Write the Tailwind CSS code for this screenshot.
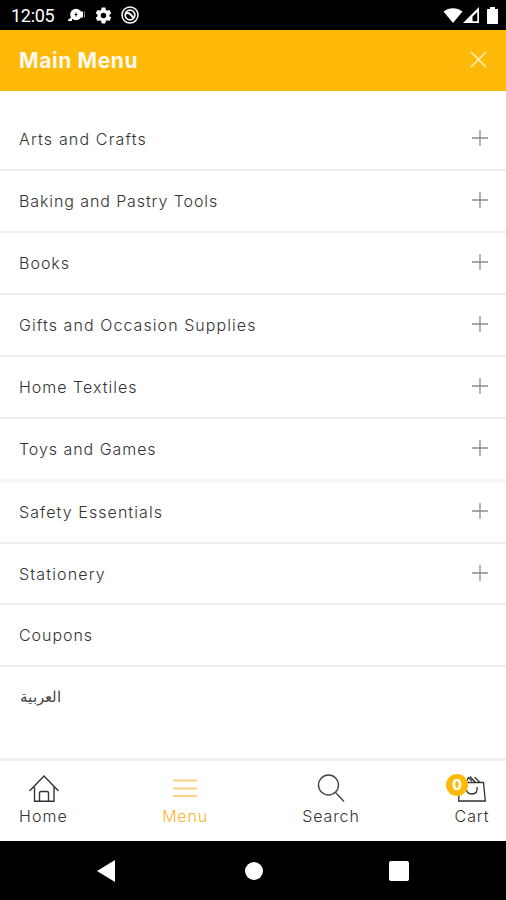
<!DOCTYPE html>
<html lang="en">
<head>
  <meta charset="UTF-8">
  <meta name="viewport" content="width=device-width, initial-scale=1.0">
  <title>Main Menu</title>
  <script src="https://cdn.jsdelivr.net/npm/@tailwindcss/browser@4"></script>
</head>
<body class="bg-white font-['Inter','Noto_Sans',sans-serif] text-[#333]">
  <div class="flex flex-col w-[506px] h-[900px] overflow-hidden">

    <!-- Status bar -->
    <div class="flex items-center h-[30px] shrink-0 bg-black text-white pl-[11px] pr-[8px]">
      <span class="font-['Roboto',sans-serif] text-[18px] leading-none tracking-[-0.3px] w-[57px] pt-[2px]">12:05</span>
      <svg class="w-[18px] h-[18px]" viewBox="0 0 18 18" fill="currentColor">
        <circle cx="8" cy="8.500" r="5.800"/><path d="M4 10v5H0z"/><circle cx="1.500" cy="14" r="1.300"/>
        <rect x="12" y="5.500" width="3" height="6"/><rect x="16" y="5.500" width="1" height="6" opacity=".5"/>
        <path d="M8 6.500v4M6.500 8.500h3" stroke="#000" stroke-width=".9"/>
      </svg>
      <svg class="w-[19px] h-[19px] ml-[8px]" viewBox="0 0 24 24" fill="currentColor">
        <path fill-rule="evenodd" d="M19.43 12.98c.04-.32.07-.64.07-.98s-.03-.66-.07-.98l2.11-1.65c.19-.15.24-.42.12-.64l-2-3.46c-.12-.22-.39-.3-.61-.22l-2.49 1c-.52-.4-1.08-.73-1.69-.98l-.38-2.65A.49.49 0 0 0 14 2h-4c-.25 0-.46.18-.49.42l-.38 2.65c-.61.25-1.17.59-1.69.98l-2.49-1c-.23-.09-.49 0-.61.22l-2 3.46c-.13.22-.07.49.12.64l2.11 1.65c-.04.32-.07.65-.07.98s.03.66.07.98l-2.11 1.65c-.19.15-.24.42-.12.64l2 3.46c.12.22.39.3.61.22l2.49-1c.52.4 1.08.73 1.69.98l.38 2.65c.03.24.24.42.49.42h4c.25 0 .46-.18.49-.42l.38-2.65c.61-.25 1.17-.59 1.69-.98l2.49 1c.23.09.49 0 .61-.22l2-3.46c.12-.22.07-.49-.12-.64zM12 15.500a3.500 3.500 0 1 1 0-7 3.500 3.500 0 0 1 0 7z"/>
      </svg>
      <svg class="w-[18px] h-[18px] ml-[8px]" viewBox="0 0 18 18" fill="none" stroke="currentColor">
        <circle cx="9" cy="9" r="8" stroke-width="1.500"/>
        <circle cx="9" cy="9" r="4.800" stroke-width="1.800"/>
        <path d="M5 7.500C8 6 9.500 8 12.500 12" stroke-width="2"/>
      </svg>
      <svg class="w-[20px] h-[17px] ml-auto" viewBox="0 0 20 17" fill="currentColor">
        <path d="M0.500 4.500C6 0 14 0 19.500 4.500L10 16z"/>
      </svg>
      <svg class="w-[16px] h-[16px]" viewBox="0 0 16 16" fill="currentColor">
        <path fill-rule="evenodd" d="M16 0v16H0zM14.300 5v9.300H9.500V9.500z"/>
      </svg>
      <svg class="w-[11px] h-[17px] ml-[8px]" viewBox="0 0 11 17" fill="currentColor">
        <path d="M3 0h5v2h2.300q.7 0 .7.7v13.600q0 .7-.7.7H.7q-.7 0-.7-.7V2.700Q0 2 .7 2H3z"/>
      </svg>
    </div>

    <!-- Header -->
    <header class="flex items-center justify-between h-[61px] shrink-0 bg-[#ffb908] text-[#fffaf0] pl-[19px] pr-[19px]">
      <h1 class="text-[21px] font-bold leading-none tracking-[0.6px]">Main Menu</h1>
      <svg class="w-[17px] h-[17px] mb-[2px]" viewBox="0 0 17 17" fill="none" stroke="#fff0c8" stroke-width="1.500"><path d="M1 1l15 15M16 1L1 16"/></svg>
    </header>

    <!-- Categories -->
    <ul class="flex flex-col pt-[18px] text-[16px] font-light">
      <li class="flex items-center justify-between h-[62px] pl-[19px] pr-[17px] border-b-2 border-[#eeeeee]">
        <span class="tracking-[1.15px]">Arts and Crafts</span>
        <svg class="w-[18px] h-[18px] mb-[2px]" viewBox="0 0 18 18" fill="none" stroke="#8c8c8c" stroke-width="1.300"><path d="M9 1v16M1 9h16"/></svg>
      </li>
      <li class="flex items-center justify-between h-[62px] pl-[19px] pr-[17px] border-b-2 border-[#eeeeee]">
        <span class="tracking-[0.9px]">Baking and Pastry Tools</span>
        <svg class="w-[18px] h-[18px] mb-[2px]" viewBox="0 0 18 18" fill="none" stroke="#8c8c8c" stroke-width="1.300"><path d="M9 1v16M1 9h16"/></svg>
      </li>
      <li class="flex items-center justify-between h-[62px] pl-[19px] pr-[17px] border-b-2 border-[#eeeeee]">
        <span class="tracking-[1px]">Books</span>
        <svg class="w-[18px] h-[18px] mb-[2px]" viewBox="0 0 18 18" fill="none" stroke="#8c8c8c" stroke-width="1.300"><path d="M9 1v16M1 9h16"/></svg>
      </li>
      <li class="flex items-center justify-between h-[62px] pl-[19px] pr-[17px] border-b-2 border-[#eeeeee]">
        <span class="tracking-[1.07px]">Gifts and Occasion Supplies</span>
        <svg class="w-[18px] h-[18px] mb-[2px]" viewBox="0 0 18 18" fill="none" stroke="#8c8c8c" stroke-width="1.300"><path d="M9 1v16M1 9h16"/></svg>
      </li>
      <li class="flex items-center justify-between h-[62px] pl-[19px] pr-[17px] border-b-2 border-[#eeeeee]">
        <span class="tracking-[1px]">Home Textiles</span>
        <svg class="w-[18px] h-[18px] mb-[2px]" viewBox="0 0 18 18" fill="none" stroke="#8c8c8c" stroke-width="1.300"><path d="M9 1v16M1 9h16"/></svg>
      </li>
      <li class="flex items-center justify-between h-[64px] pl-[19px] pr-[17px] border-b-4 border-[#f7f7f7]">
        <span class="tracking-[0.95px]">Toys and Games</span>
        <svg class="w-[18px] h-[18px] mb-[2px]" viewBox="0 0 18 18" fill="none" stroke="#8c8c8c" stroke-width="1.300"><path d="M9 1v16M1 9h16"/></svg>
      </li>
      <li class="flex items-center justify-between h-[61px] pl-[19px] pr-[17px] pb-[2px] border-b-2 border-[#eeeeee]">
        <span class="tracking-[1.07px]">Safety Essentials</span>
        <svg class="w-[18px] h-[18px] mb-[2px]" viewBox="0 0 18 18" fill="none" stroke="#8c8c8c" stroke-width="1.300"><path d="M9 1v16M1 9h16"/></svg>
      </li>
      <li class="flex items-center justify-between h-[61px] pl-[19px] pr-[17px] border-b-2 border-[#eeeeee]">
        <span class="tracking-[1.15px]">Stationery</span>
        <svg class="w-[18px] h-[18px] mb-[2px]" viewBox="0 0 18 18" fill="none" stroke="#8c8c8c" stroke-width="1.300"><path d="M9 1v16M1 9h16"/></svg>
      </li>
      <li class="flex items-center h-[62px] pl-[19px] border-b-2 border-[#eeeeee]">
        <span class="tracking-[0.95px]">Coupons</span>
      </li>
      <li class="flex items-center h-[62px] pl-[20px]">
        <span lang="ar" class="font-['DejaVu_Sans',sans-serif] text-[14.500px] text-[#444]">العربية</span>
      </li>
    </ul>

    <!-- Tab bar -->
    <nav class="flex justify-between h-[83px] shrink-0 mt-auto border-t-3 border-[#f0f0f0] pl-[19px] pr-[16px] pt-[13px] text-[16px] font-light leading-none">
      <a class="flex flex-col items-center w-[49px]">
        <svg class="w-[30px] h-[29px]" viewBox="0 0 30 29" fill="none" stroke="#333" stroke-width="1.400">
          <path d="M0.500 17L15 2l14.500 15"/><path d="M5.500 13v14.300h19.500V13"/><path d="M10.500 27v-8q0-1.500 1.500-1.500h6q1.500 0 1.500 1.500v8"/>
        </svg>
        <span class="mt-[5px] tracking-[1.1px]">Home</span>
      </a>
      <a class="flex flex-col items-center w-[46px] text-[#fdb52d]">
        <svg class="w-[24px] h-[29px]" viewBox="0 0 24 29" fill="none" stroke="#fdd08a" stroke-width="2"><path d="M0 6.500h24M0 14.500h24M0 22h24"/></svg>
        <span class="mt-[5px] tracking-[0.8px]">Menu</span>
      </a>
      <a class="flex flex-col items-center w-[58px]">
        <svg class="w-[28px] h-[29px]" viewBox="0 0 28 29" fill="none" stroke="#444" stroke-width="1.400"><circle cx="11.500" cy="11" r="10"/><path d="M18.500 18.500L27 27.500"/></svg>
        <span class="mt-[5px] tracking-[0.9px]">Search</span>
      </a>
      <a class="relative flex flex-col items-center w-[36px]">
        <svg class="w-[28px] h-[29px]" viewBox="0 0 28 29" fill="none" stroke="#333" stroke-width="1.300">
          <path d="M2 8.500h23.500L27.300 27H0.600z"/>
          <path d="M8 13q0 7 6 7t5-7"/>
          <path d="M8 8l2.500-4.500L14 7M12 2.500L17 8M16.500 3L21.500 8"/>
        </svg>
        <span class="absolute left-[-8px] top-[0px] flex items-center justify-center size-[22px] rounded-full bg-[#ffb908] text-white text-[14px] font-extrabold">0</span>
        <span class="mt-[5px] tracking-[0.9px]">Cart</span>
      </a>
    </nav>

    <!-- System navigation -->
    <div class="flex items-center justify-between h-[59px] shrink-0 bg-black pl-[97px] pr-[97px]">
      <svg class="w-[18px] h-[22px]" viewBox="0 0 18 22" fill="#fff"><path d="M18 0v22L0 11z"/></svg>
      <div class="size-[18px] ml-[3px] rounded-full bg-white"></div>
      <div class="size-[20px] rounded-[2px] bg-white"></div>
    </div>
  </div>
</body>
</html>
